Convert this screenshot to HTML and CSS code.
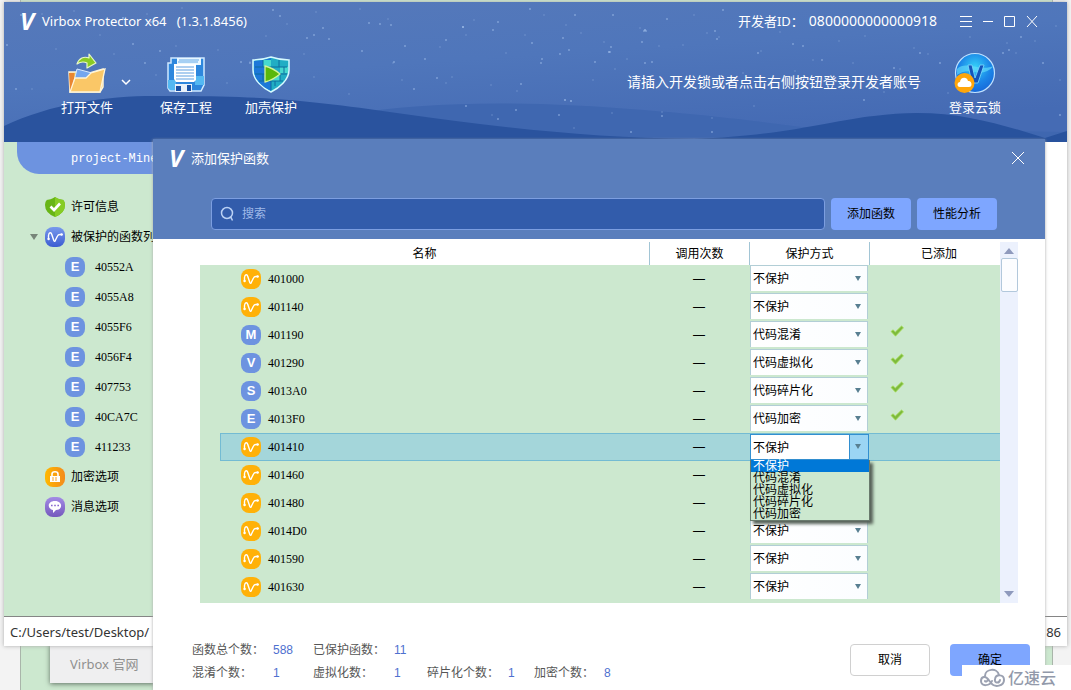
FILE: index.html
```html
<!DOCTYPE html>
<html lang="zh-CN">
<head>
<meta charset="utf-8">
<title>Virbox Protector x64</title>
<link rel="stylesheet" href="styles.css">
</head>
<body>
<svg class="defs" aria-hidden="true">
  <symbol id="wave" viewBox="0 0 20 20"><path d="M3.500 12V8.500C4 5 6 5 6.800 7.500L8.800 13.500C9.500 15 10 14.500 10.500 13L12.500 9C13 7.800 13.500 7.500 15 7.500H17" fill="none" stroke="#fff" stroke-width="1.400" stroke-linecap="round"/><circle cx="3.600" cy="12" r="1.200" fill="#fff"/><circle cx="16.600" cy="7.500" r="1.200" fill="#fff"/></symbol>
  <symbol id="tick" viewBox="0 0 14 12"><path d="M1 6.500L3 4.800L5.300 7L11.500 1L13.500 2.800L5.500 11.200Z" fill="#7dba3c" stroke="#a9e05a" stroke-width=".8"/></symbol>
</svg>
<div class="desktop">
  <div class="backdrop"></div>
  <div class="menu-panel"><a href="#">Virbox 官网</a></div>

  <main class="window">
    <header class="banner">
      <svg class="scene" viewBox="0 0 1063 140" preserveAspectRatio="none" aria-hidden="true">
        <defs><linearGradient id="sky" x1="0" y1="0" x2=".5" y2="1"><stop offset="0" stop-color="#5679ba"/><stop offset=".5" stop-color="#4f76bb"/><stop offset="1" stop-color="#456bb4"/></linearGradient></defs>
        <rect width="1063" height="140" fill="url(#sky)"/>
        <path d="M340 113C430 98 530 99 640 108S780 124 820 127L1063 130V140H340Z" fill="#3f67b0"/>
        <path d="M0 124C50 100 110 93 160 94C270 93 330 102 400 112C500 126 590 136 690 137V140H0Z" fill="#2a539e"/>
        <path d="M690 137C780 134 830 118 870 114C940 104 990 120 1041 136L1063 129V140H690Z" fill="#28529d"/>
        <path class="stars dim" d="M20 20h0M38 12h0M52 47h0M70 9h0M96 33h0M110 52h0M143 12h0M172 44h0M178 6h0M196 27h0M214 48h0M230 14h0M246 60h0M262 34h0M283 22h0M300 52h0M312 10h0M356 7h0M384 17h0M389 61h0M398 78h0M436 45h0M442 81h0M448 75h0M462 33h0M470 18h0M487 83h0M502 51h0M513 89h0M521 33h0M540 13h0M562 23h0M577 31h0M589 78h0M600 40h0M611 67h0M623 57h0M636 26h0M655 44h0M679 43h0M690 13h0M703 31h0M715 35h0M739 71h0M757 49h0M776 30h0M791 69h0M809 58h0M835 39h0M849 61h0M861 34h0M880 90h0M896 67h0M910 46h0M924 52h0M944 91h0M966 35h0M981 67h0M1003 41h0M1012 51h0M1031 39h0M1052 24h0M1056 78h0M28 87h0M82 79h0M152 73h0M223 81h0M310 75h0M345 92h0M488 113h0M570 126h0M608 111h0M658 110h0M708 116h0M750 104h0"/>
        <path class="stars" d="M3 43h0M12 87h0M17 13h0M129 42h0M147 20h0M141 61h0M156 49h0M237 60h0M246 61h0M269 8h0M276 14h0M303 36h0M310 33h0M319 26h0M325 37h0M358 49h0M365 21h0M376 22h0M387 23h0M401 44h0M421 57h0M390 60h0M410 87h0M442 38h0M459 25h0M494 20h0M489 28h0M526 7h0M528 41h0M537 61h0M538 57h0M556 52h0M565 48h0M559 36h0M591 60h0M607 45h0M609 13h0M638 40h0M571 13h0M517 82h0M433 76h0M462 104h0M494 117h0M512 108h0M555 113h0M640 29h0M642 29h0M606 50h0M641 61h0M648 60h0M663 17h0M711 29h0M713 37h0M719 8h0M789 42h0M754 51h0M799 44h0M818 58h0M861 19h0M869 86h0M890 66h0M916 51h0M936 61h0M999 51h0M1005 48h0M1039 61h0M1017 35h0M1056 113h0M658 114h0M708 130h0M627 130h0M860 98h0"/>
        <path class="stars big" d="M119 16h0M459 25h0M605 50h0M561 98h0M567 99h0M641 28h0"/>
      </svg>
      <div class="titlebar">
        <span class="logo">V</span>
        <h1>Virbox Protector x64&nbsp;&nbsp; (1.3.1.8456)</h1>
        <span class="dev">开发者ID：</span><span class="dev-id">0800000000000918</span>
        <div class="controls">
          <button aria-label="菜单"><svg width="14" height="14"><path d="M1 2.500H13M1 7.500H13M1 12.500H13"/></svg></button>
          <button aria-label="最小化"><svg width="14" height="14"><path d="M2 7.500H12"/></svg></button>
          <button aria-label="最大化"><svg width="14" height="14"><path d="M1.500 2.500H11.500V12.500H1.500Z"/></svg></button>
          <button aria-label="关闭"><svg width="14" height="14"><path d="M2 2L12 13M12 2L2 13"/></svg></button>
        </div>
      </div>
      <div class="toolbar">
        <button class="tool">
          <svg width="40" height="42" viewBox="0 0 40 42"><path d="M2 20H13L16 23L36 17V35L33 40H3Z" fill="#f0b443" stroke="#fff5d8" stroke-width="1.500"/><path d="M2 21H7V39H3Z" fill="#e98632"/><path d="M10 17L25 21L23 27L7 29Z" fill="#73a6ef" stroke="#d8eaff"/><path d="M8 26H19L24 21L38 17L33 40H3Z" fill="#fac767" stroke="#fff5d8" stroke-width="1.300"/><path d="M10 12C12 6 17 4 22 6V2L29 11L20 16V11C16 9 13 10 10 12Z" fill="#8acb24" stroke="#e8f8c8" stroke-width="1.200" stroke-linejoin="round"/></svg>
          <span>打开文件</span>
        </button>
        <button class="more" aria-label="更多"><svg width="10" height="8"><path d="M1 2L5 6L9 2"/></svg></button>
        <button class="tool">
          <svg width="40" height="42" viewBox="0 0 40 42"><path d="M5 6H38V33L35 39H4L2 36V11H5Z" fill="#2e87dd" stroke="#cfe9ff" stroke-width="1.500"/><path d="M11 6H35V13H11Z" fill="#e9f7ff"/><path d="M13 8H33M12 10H32" stroke="#64a9e8"/><path d="M2 28H10V38H4L2 36ZM29 24H38V33H29Z" fill="#54b9f2"/><path d="M8 12H30V28L28 30H10L8 27Z" fill="#fff"/><path d="M10 15H28M10 18H28M10 21H28M10 24H28M10 27H28" stroke="#5f9fe2" stroke-width="1.200"/><path d="M9 32H26V40H9Z" fill="#e9f1f9"/><path d="M10 34H15V39H10ZM21 33H25V39H21Z" fill="#1951a4"/></svg>
          <span>保存工程</span>
        </button>
        <button class="tool">
          <svg width="40" height="42" viewBox="0 0 40 42"><path d="M2 8Q11 8 20 5Q29 8 38 8V18C38 28 28 36 20 40C12 36 2 28 2 18Z" fill="#21adc4" stroke="#d5faff" stroke-width="1.500"/><path d="M3 9Q12 9 20 6V39C10 34 3 27 3 18Z" fill="#1c78d8"/><path d="M12 8H20V15H12ZM20 22H29V29H20ZM29 15H37V21H29Z" fill="#46d9cf"/><path d="M4 15H36M4 22H36M8 29H32M12 8V15M28 8V15M20 15V22M33 15V21M12 22V29M29 22V29M20 29V38M24 29V34" stroke="#0c6d9e" fill="none"/><path d="M14 14Q22 16 29 22Q22 28 14 30Z" fill="#59b80b" stroke="#d2f39a" stroke-width="1.300" stroke-linejoin="round"/></svg>
          <span>加壳保护</span>
        </button>
        <p class="hint">请插入开发锁或者点击右侧按钮登录开发者账号</p>
        <button class="tool cloud">
          <svg width="42" height="42" viewBox="0 0 42 42"><defs><radialGradient id="orb" cx=".5" cy=".35" r=".65"><stop offset="0" stop-color="#35d1f8"/><stop offset=".6" stop-color="#1b86e8"/><stop offset="1" stop-color="#1668d9"/></radialGradient></defs><circle cx="21" cy="21" r="19.500" fill="url(#orb)" stroke="#bfe1ff" stroke-width="1.200"/><path d="M3 17C12 8 25 20 40 14C34 20 28 22 21 20C12 18 8 20 3 23Z" fill="#66ddfa" opacity=".65"/><path d="M14 13H18L21 26L26 13H30L24 31H18Z" fill="#1454ba" stroke="#7ddcff" stroke-width=".8"/><circle cx="10.500" cy="31" r="10" fill="#ffa60a"/><path d="M6 35C2.500 35 3 30 6 30C6 25 13 24 14 29C18 28 19 35 15 35Z" fill="#fff"/></svg>
          <span>登录云锁</span>
        </button>
      </div>
    </header>
    <section class="workspace">
      <nav class="sidebar">
        <div class="tab">project-Mine</div>
        <ul class="tree">
          <li><svg class="icon" viewBox="0 0 20 20"><path d="M0 3Q6 3 10 0Q14 3 20 3V8Q20 16 10 20Q0 16 0 8Z" fill="#68b516"/><path d="M10 0Q14 3 20 3V8Q20 16 10 20Z" fill="#86cc24"/><path d="M5.500 9.500L9 13L15 6.500" fill="none" stroke="#fff" stroke-width="2.600"/></svg>许可信息</li>
          <li class="expanded"><svg class="icon blue" viewBox="0 0 20 20"><use href="#wave"/></svg>被保护的函数列</li>
          <li class="child"><b class="badge">E</b>40552A</li>
          <li class="child"><b class="badge">E</b>4055A8</li>
          <li class="child"><b class="badge">E</b>4055F6</li>
          <li class="child"><b class="badge">E</b>4056F4</li>
          <li class="child"><b class="badge">E</b>407753</li>
          <li class="child"><b class="badge">E</b>40CA7C</li>
          <li class="child"><b class="badge">E</b>411233</li>
          <li><svg class="icon orange" viewBox="0 0 20 20"><path d="M7 9V7C7 4 13 4 13 7V9" fill="none" stroke="#fff" stroke-width="1.600"/><path d="M5 9H15V15H5Z" fill="#fff"/><path d="M7 11H13M7 13H13" stroke="#f7a327" stroke-dasharray="2 1"/></svg>加密选项</li>
          <li><svg class="icon purple" viewBox="0 0 20 20"><path d="M10 4C18 4 18 13 11 13L8 16V13C2 12 2 4 10 4Z" fill="#fff"/><path d="M6 8.500H14" stroke="#8768ce" stroke-width="1.600" stroke-dasharray="1.600 1.600"/></svg>消息选项</li>
        </ul>
      </nav>
    </section>
    <footer class="statusbar"><span>C:/Users/test/Desktop/</span><span>86</span></footer>
  </main>

  <section class="dialog" role="dialog" aria-labelledby="dialog-title">
    <header class="dialog-head">
      <div class="dialog-title">
        <span class="logo">V</span><h2 id="dialog-title">添加保护函数</h2>
        <button aria-label="关闭"><svg width="14" height="14"><path d="M1 1L13 13M13 1L1 13"/></svg></button>
      </div>
      <div class="actions">
        <label class="search"><svg width="16" height="16" viewBox="0 0 16 16"><circle cx="7" cy="7" r="5.500"/><path d="M9.500 11.500H11L12.500 14.500"/></svg><input type="text" placeholder="搜索" aria-label="搜索"></label>
        <button class="primary">添加函数</button>
        <button class="primary">性能分析</button>
      </div>
    </header>
    <div class="listing">
      <table>
        <colgroup><col><col class="c-calls"><col class="c-mode"><col class="c-added"></colgroup>
        <thead><tr><th>名称</th><th>调用次数</th><th>保护方式</th><th>已添加</th></tr></thead>
        <tbody>
          <tr><td><div class="name"><svg class="icon amber"><use href="#wave"/></svg>401000</div></td><td>—</td><td><div class="combo"><select aria-label="401000"><option>不保护</option></select></div></td><td></td></tr>
          <tr><td><div class="name"><svg class="icon amber"><use href="#wave"/></svg>401140</div></td><td>—</td><td><div class="combo"><select aria-label="401140"><option>不保护</option></select></div></td><td></td></tr>
          <tr><td><div class="name"><b class="badge">M</b>401190</div></td><td>—</td><td><div class="combo"><select aria-label="401190"><option>代码混淆</option></select></div></td><td><svg class="tick"><use href="#tick"/></svg></td></tr>
          <tr><td><div class="name"><b class="badge">V</b>401290</div></td><td>—</td><td><div class="combo"><select aria-label="401290"><option>代码虚拟化</option></select></div></td><td><svg class="tick"><use href="#tick"/></svg></td></tr>
          <tr><td><div class="name"><b class="badge">S</b>4013A0</div></td><td>—</td><td><div class="combo"><select aria-label="4013A0"><option>代码碎片化</option></select></div></td><td><svg class="tick"><use href="#tick"/></svg></td></tr>
          <tr><td><div class="name"><b class="badge">E</b>4013F0</div></td><td>—</td><td><div class="combo"><select aria-label="4013F0"><option>代码加密</option></select></div></td><td><svg class="tick"><use href="#tick"/></svg></td></tr>
          <tr class="current"><td><div class="name"><svg class="icon amber"><use href="#wave"/></svg>401410</div></td><td>—</td><td><div class="combo open"><select aria-label="401410"><option>不保护</option></select>
            <ul class="options" role="listbox" aria-label="保护方式"><li role="option" aria-selected="true">不保护</li><li role="option">代码混淆</li><li role="option">代码虚拟化</li><li role="option">代码碎片化</li><li role="option">代码加密</li></ul></div></td><td></td></tr>
          <tr><td><div class="name"><svg class="icon amber"><use href="#wave"/></svg>401460</div></td><td>—</td><td></td><td></td></tr>
          <tr><td><div class="name"><svg class="icon amber"><use href="#wave"/></svg>401480</div></td><td>—</td><td></td><td></td></tr>
          <tr><td><div class="name"><svg class="icon amber"><use href="#wave"/></svg>4014D0</div></td><td>—</td><td><div class="combo"><select aria-label="4014D0"><option>不保护</option></select></div></td><td></td></tr>
          <tr><td><div class="name"><svg class="icon amber"><use href="#wave"/></svg>401590</div></td><td>—</td><td><div class="combo"><select aria-label="401590"><option>不保护</option></select></div></td><td></td></tr>
          <tr><td><div class="name"><svg class="icon amber"><use href="#wave"/></svg>401630</div></td><td>—</td><td><div class="combo"><select aria-label="401630"><option>不保护</option></select></div></td><td></td></tr>
        </tbody>
      </table>
      <div class="scrollbar"><i class="up"></i><i class="thumb"></i><i class="down"></i></div>
    </div>
    <footer class="dialog-foot">
      <dl class="stats">
        <div><dt>函数总个数：</dt><dd>588</dd></div><div class="last"><dt>已保护函数：</dt><dd>11</dd></div>
        <div><dt>混淆个数：</dt><dd>1</dd></div><div><dt>虚拟化数：</dt><dd>1</dd></div><div><dt>碎片化个数：</dt><dd>1</dd></div><div class="short"><dt>加密个数：</dt><dd>8</dd></div>
      </dl>
      <button class="cancel">取消</button>
      <button class="primary confirm">确定</button>
    </footer>
  </section>
  <div class="watermark">
    <svg width="28" height="20" viewBox="0 0 28 20" aria-hidden="true"><path d="M13 13C11 18 2 19 2 13C2 8 7 8 9 11L12 15C16 20 25 18 25 12C25 6 17 6 16 11C15 15 20 16 21 12M6 8C6 1 18 -1 20 7M6 13C6 14 9 14 9 11" fill="none" stroke="#9ba1b1" stroke-width="2" stroke-linecap="round"/></svg>
    <span>亿速云</span>
  </div>
</div>
</body>
</html>
```
FILE: styles.css
```css
* { box-sizing: border-box; }
body { margin: 0; font: 12px/16px "Liberation Sans", "Noto Sans CJK SC", sans-serif; color: #000; }
h1, h2, p, ul, dl, dd { margin: 0; padding: 0; font-weight: normal; }
ul { list-style: none; }
button { border: 0; padding: 0; background: none; color: inherit; font: inherit; }
a { color: inherit; text-decoration: none; }
.defs { position: absolute; width: 0; height: 0; }
.desktop { position: relative; height: 100vh; overflow: hidden; background: #f3f3f3; }

/* Windows on the desktop */
.backdrop { position: absolute; inset: 0 18px 0 20px; background: #cce8cf; border: solid #a9b5aa; border-width: 0 1px; }
.menu-panel { position: absolute; left: 50px; bottom: 7px; width: 160px; height: 60px; padding: 31px 20px 9px; background: #efeff0; color: #8f8f8f; font: 13px/20px "Noto Sans", "Noto Sans CJK SC", sans-serif; box-shadow: 0 1px 5px #5f6f62; }
.window { position: absolute; inset: 2px 4px 44px; display: flex; flex-direction: column; background: #fff; box-shadow: 0 0 4px #aaa; }
.dialog { position: absolute; inset: 139px 26px 0 153px; display: flex; flex-direction: column; background: #fff; box-shadow: 0 1px 3px #aaa; }

.banner { position: relative; height: 140px; color: #fff; font: 13px/18px "Noto Sans", "Noto Sans CJK SC", sans-serif; }
.scene { position: absolute; inset: 0; width: 100%; height: 100%; }
.stars { stroke: #9dbbe8; stroke-width: 2; stroke-linecap: round; opacity: .6; }
.dim { opacity: .25; }
.big { opacity: .8; }
.titlebar, .toolbar { position: relative; display: flex; }
.titlebar { height: 38px; align-items: center; padding: 0 28px 0 16px; font-size: 14px; }
.titlebar h1 { flex: 1; font-size: 13px; }
.logo { width: 22px; color: #fff; font: italic bold 24px/24px "Open Sans", sans-serif; }
.dev { font-size: 13px; margin-right: 5px; }
.controls { display: flex; gap: 8px; margin-left: 22px; }
.controls button, .dialog-title button { display: flex; }
.controls svg, .more svg, .dialog-title svg { fill: none; stroke: #fff; }
.toolbar { padding: 12px 65px 0 56px; align-items: flex-start; }
.tool { display: flex; flex-direction: column; align-items: center; gap: 4px; width: 54px; }
.more { display: flex; margin: 22px 24px 0 3px; padding: 4px; }
.more svg { stroke-width: 1.5px; }
.tool + .tool { margin-left: 31px; }
.hint { flex: 1; padding: 21px 27px 0 0; text-align: right; font-size: 14px; }

.workspace { flex: 1; min-height: 0; display: flex; }
.sidebar { width: 28%; padding-left: 13px; background: #cce8cf; }
.tab { height: 32px; padding: 0 54px; background: #6d93e0; border-radius: 0 0 0 22px; color: #fff; font: 12px/34px "Liberation Mono", monospace; }
.tree { padding: 18px 0 0 28px; }
.tree li { position: relative; display: flex; align-items: center; gap: 6px; height: 30px; white-space: nowrap; }
.tree .child { gap: 10px; padding-left: 20px; }
.tree .child, .name { font-family: "Liberation Serif", serif; }
.expanded::before { content: ""; position: absolute; left: -15px; border: solid transparent; border-width: 6px 4px 0; border-top-color: #778579; }
.icon, .badge { flex: none; width: 20px; height: 20px; border-radius: 8px; }
.badge { background: #6d93e0; color: #fff; text-align: center; font: bold 13px/20px "Liberation Sans", sans-serif; }
.blue { background: linear-gradient(#7899ec, #3c5cd2); }
.orange { background: linear-gradient(90deg, #ffb800, #f48b1c); }
.purple { background: linear-gradient(#a38be5, #7558bd); }
.amber { background: #ffb108; }
.statusbar { display: flex; justify-content: space-between; height: 30px; padding: 0 6px; border-top: 1px solid #858585; background: #fff; color: #333; font: 13px/30px "Noto Sans", sans-serif; }

.dialog-head { background: #5a7ebc; color: #fff; }
.dialog-title { display: flex; align-items: center; height: 38px; padding: 0 20px 0 16px; font: 13px/18px "Noto Sans CJK SC", sans-serif; }
.dialog-title h2 { flex: 1; font-size: 13px; }
.actions { display: flex; gap: 6px; padding: 21px 48px 9px 58px; }
.search { flex: 1; display: flex; align-items: center; gap: 6px; height: 32px; padding: 0 8px; background: #325cab; border: 1px solid #7c9ee0; border-radius: 4px; }
.search svg { fill: none; stroke: #bad1f5; stroke-width: 1.5px; }
.search input { flex: 1; border: 0; outline: 0; padding: 0; background: none; color: #fff; font: inherit; }
.search input::placeholder { color: #9fb9e8; }
.primary, .cancel { width: 80px; height: 32px; border-radius: 4px; background: #7ea6ff; color: #000; }

.listing { display: flex; margin: 3px 27px 0 47px; padding: 0; background: #cce8cf; }
table { flex: 1; table-layout: fixed; border-collapse: separate; border-spacing: 0; margin-bottom: 2px; }
.c-calls { width: 100px; }
.c-mode { width: 120px; }
.c-added { width: 131px; }
thead { background: #fff; }
th { height: 23px; padding: 0; font-weight: normal; }
th + th { border-left: 1px solid #a2c5d5; }
th:last-child { padding-left: 8px; }
td { height: 28px; padding: 0; text-align: center; }
td:first-child { padding-left: 20px; }
.name { display: flex; align-items: center; gap: 7px; height: 28px; padding-left: 21px; }
.combo { position: relative; height: 28px; padding: 0 1px 2px; text-align: left; }
.combo::after { content: ""; position: absolute; right: 8px; top: 11px; border: solid transparent; border-width: 5px 3px 0; border-top-color: #587f91; }
.combo select { appearance: none; display: block; width: 100%; height: 26px; border: 1px solid #b2ced6; border-bottom: 0; border-radius: 0; padding: 1px 2px 0; outline: 0; background: linear-gradient(90deg, #fff, #fbfdff); font: inherit; color: #000; }
.tick { display: block; width: 14px; height: 12px; margin: 0 0 8px 21px; }
.current td:nth-child(n+2), .current .name { background: #a4d6da; box-shadow: inset 0 1px #73bbd3, inset 0 -1px #73bbd3; }
.current .name { border-left: 1px solid #73bbd3; padding-left: 20px; }
.current .combo { padding: 1px 0 0 1px; }
.open select { border: 1px solid #328fd0; background: linear-gradient(90deg, #fff calc(100% - 19px), #328fd0 0, #328fd0 calc(100% - 18px), #9bd5f4 0); }
.options { position: absolute; z-index: 1; top: 27px; left: 1px; right: -1px; border: 1px solid #697a6d; border-top: 0; background: #cce8cf; box-shadow: 3px 3px 3px #566158; }
.options li { height: 12px; padding-left: 2px; line-height: 12px; }
.options li[aria-selected] { background: #0078d7; color: #fff; }
.scrollbar { display: flex; flex-direction: column; align-items: center; width: 18px; padding: 6px 0; background: #ecf1fd; }
.up, .down { border: solid transparent; border-width: 0 5px 6px; border-bottom-color: #8f9abd; }
.thumb { width: 17px; height: 34px; margin: 4px 0 auto; border: 1px solid #b2c8dc; border-radius: 2px; background: #fcfdff; }
.down { border-width: 6px 5px 0; border-top-color: #8f9abd; }
.dialog-foot { flex: 1; display: flex; align-items: flex-start; gap: 20px; padding: 41px 15px 0 39px; }
.stats { flex: 1; display: grid; grid-template-columns: 121px 114px 107px auto; row-gap: 7px; margin-top: -2px; color: #565656; }
.stats div { display: flex; }
.stats .last { grid-column: 2 / -1; }
.stats dt { width: 81px; }
.stats .short dt { width: 70px; }
.stats dd { color: #4e70cf; }
.cancel { background: #fff; border: 1px solid #d0d0d0; }
.watermark { position: absolute; right: 0; bottom: 0; display: flex; align-items: center; gap: 1px; width: 109px; height: 25px; padding-left: 17px; background: #fff; color: #9299aa; font: 500 16px/25px "Noto Sans CJK SC", sans-serif; }
```
